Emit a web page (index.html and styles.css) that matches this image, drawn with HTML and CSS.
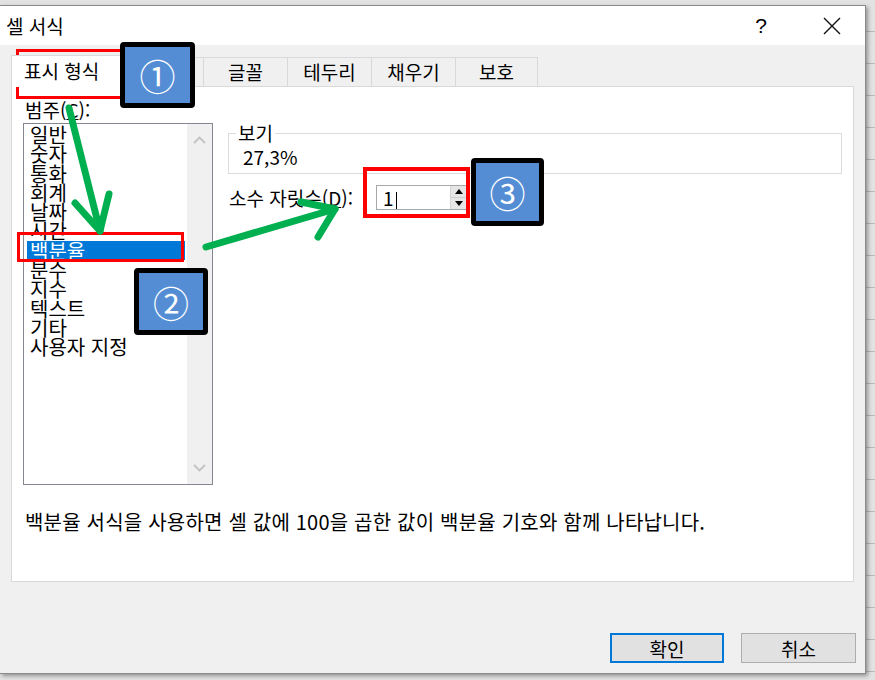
FILE: index.html
```html
<!DOCTYPE html>
<html lang="ko">
<head>
  <meta charset="UTF-8" />
  <title>셀 서식</title>
  <link rel="stylesheet" href="styles.css">
</head>
<body>

  <div class="screen">
    <div class="dialog">

      <!-- Title bar -->
      <div class="titlebar">
        <span class="title">셀 서식</span>
        <span class="help">?</span>
        <span class="close">
          <svg width="18" height="18" viewBox="0 0 18 18"><path d="M1 1 L17 17 M17 1 L1 17" stroke="#111" stroke-width="1.4" fill="none"/></svg>
        </span>
      </div>

      <div class="dlg-body">
        <!-- Tabs -->
        <div class="tabs">
          <div class="tab active w1">표시 형식</div>
          <div class="tab w2">맞춤</div>
          <div class="tab w3">글꼴</div>
          <div class="tab w3">테두리</div>
          <div class="tab w3">채우기</div>
          <div class="tab w4">보호</div>
        </div>

        <div class="panel">
          <div class="panel-main">
            <div class="cat-col">
              <div class="lbl">범주(<u>C</u>):</div>
              <div class="listbox">
                <ul class="items">
                  <li>일반</li>
                  <li>숫자</li>
                  <li>통화</li>
                  <li>회계</li>
                  <li>날짜</li>
                  <li>시간</li>
                  <li class="sel">백분율</li>
                  <li>분수</li>
                  <li>지수</li>
                  <li>텍스트</li>
                  <li>기타</li>
                  <li>사용자 지정</li>
                </ul>
                <div class="vscroll">
                  <div class="sb-arrow"><svg width="13" height="8" viewBox="0 0 13 8"><path d="M1 7 L6.5 1.5 L12 7" stroke="#c2c2c2" stroke-width="1.8" fill="none"/></svg></div>
                  <div class="sb-arrow"><svg width="13" height="8" viewBox="0 0 13 8"><path d="M1 1 L6.5 6.5 L12 1" stroke="#c2c2c2" stroke-width="1.8" fill="none"/></svg></div>
                </div>
              </div>
            </div>

            <div class="opt-col">
              <fieldset class="sample">
                <legend>보기</legend>
                <div class="sample-val">27,3%</div>
              </fieldset>
              <div class="decimals">
                <label>소수 자릿수(<u>D</u>):</label>
                <div class="spin">
                  <div class="spin-val">1<span class="caret"></span></div>
                  <div class="spin-btns">
                    <div class="spin-up"><span class="tri-up"></span></div>
                    <div class="spin-down"><span class="tri-down"></span></div>
                  </div>
                </div>
              </div>
            </div>
          </div>

          <p class="desc">백분율 서식을 사용하면 셀 값에 100을 곱한 값이 백분율 기호와 함께 나타납니다.</p>
        </div>

        <div class="buttons">
          <button class="btn ok">확인</button>
          <button class="btn cancel">취소</button>
        </div>
      </div>
    </div>

    <!-- Annotations drawn over the screenshot -->
    <div class="marks">
      <div class="red-box red1"></div>
      <div class="red-box red2"></div>
      <div class="red-box red3"></div>
      <svg class="arrows" width="875" height="680" viewBox="0 0 875 680">
        <g stroke="#00b050" stroke-width="7" fill="none" stroke-linecap="round" stroke-linejoin="round">
          <path d="M69 108 L100 231"/>
          <path d="M75 203 L100 231 L109 194"/>
          <path d="M206 247 L335 209"/>
          <path d="M301 202 L335 209 L318 237"/>
        </g>
      </svg>
      <div class="num n1">①</div>
      <div class="num n2">②</div>
      <div class="num n3">③</div>
    </div>
  </div>

</body>
</html>
```

FILE: styles.css
```css
* {
  box-sizing: border-box;
}
body {
  margin: 0;
  font-family: "Noto Sans CJK KR", "Noto Sans", sans-serif;
  color: #000;
}
/* Spreadsheet behind the dialog */
.screen {
  position: relative;
  width: 875px;
  height: 680px;
  overflow: hidden;
  padding-top: 5px;
  background: repeating-linear-gradient(to bottom, #e2e2e2 0 31px, #b9b9b9 31px 32px);
}
.dialog {
  width: 866px;
  height: 669px;
  border: 1px solid #8a8a8a;
  border-left: none;
  background: #f0f0f0;
  box-shadow: 2px 2px 4px rgba(0,0,0,0.35);
  display: flex;
  flex-direction: column;
}
.titlebar {
  height: 39px;
  background: #fff;
  display: flex;
  align-items: center;
  flex-shrink: 0;
}
.title {
  padding-left: 6px;
  font-size: 19px;
}
.help {
  margin-left: auto;
  margin-right: 28px;
  width: 40px;
  text-align: center;
  font-size: 21px;
  font-family: "Liberation Sans", sans-serif;
}
.close {
  width: 46px;
  margin-right: 10px;
  display: flex;
  justify-content: center;
}
.dlg-body {
  flex: 1;
  padding-top: 12px;
  display: flex;
  flex-direction: column;
}
/* Tabs */
.tabs {
  display: flex;
  align-items: flex-end;
  height: 30px;
  padding-left: 11px;
  margin-bottom: -1px;
}
.tab {
  height: 30px;
  border: 1px solid #d9d9d9;
  border-right: none;
  background: #f0f0f0;
  font-size: 19px;
  line-height: 27px;
  text-align: center;
}
.tab.w4 {
  border-right: 1px solid #d9d9d9;
}
.tab.active {
  height: 32px;
  background: #fff;
  border-bottom: none;
  position: relative;
  z-index: 1;
  line-height: 30px;
  text-align: left;
  padding-left: 12px;
}
.w1 { width: 109px; }
.w2 { width: 83px; }
.w3 { width: 84px; }
.w4 { width: 83px; }
/* Panel */
.panel {
  height: 496px;
  margin: 0 11px 0 11px;
  border: 1px solid #d9d9d9;
  background: #fff;
  padding: 10px 11px 0 11px;
}
.panel-main {
  display: flex;
  gap: 15px;
}
.cat-col {
  width: 190px;
}
.lbl {
  font-size: 19px;
  line-height: 26px;
  padding-left: 2px;
}
.listbox {
  height: 362px;
  border: 1px solid #828790;
  display: flex;
}
.items {
  list-style: none;
  margin: 0;
  padding: 1px 0 0 3px;
  flex: 1;
  font-size: 20px;
  line-height: 19.3px;
}
.items li {
  padding-left: 3px;
  margin-right: 2px;
  white-space: nowrap;
}
.items li.sel {
  background: #0078d7;
  color: #fff;
}
.vscroll {
  width: 25px;
  background: #f0f0f0;
  display: flex;
  flex-direction: column;
  justify-content: space-between;
}
.sb-arrow {
  height: 32px;
  display: flex;
  align-items: center;
  justify-content: center;
}
.opt-col {
  flex: 1;
}
.sample {
  margin: 25px 0 0 0;
  border: 1px solid #dcdcdc;
  padding: 2px 14px 5px;
  min-width: 0;
}
.sample legend {
  padding: 0 2px;
  margin-left: -7px;
  font-size: 19px;
  line-height: 22px;
}
.sample-val {
  font-size: 19px;
  line-height: 22px;
}
.decimals {
  display: flex;
  align-items: center;
  margin-top: 11px;
  height: 25px;
}
.decimals label {
  width: 148px;
  padding-left: 1px;
  font-size: 19px;
  line-height: 25px;
  white-space: nowrap;
}
.spin {
  width: 91px;
  height: 25px;
  border: 1px solid #a8a8a8;
  display: flex;
}
.spin-val {
  flex: 1;
  padding-left: 6px;
  font-size: 19px;
  line-height: 23px;
}
.caret {
  display: inline-block;
  width: 1px;
  height: 17px;
  background: #000;
  margin-left: 2px;
  vertical-align: -3px;
}
.spin-btns {
  width: 16px;
  display: flex;
  flex-direction: column;
  border-left: 1px solid #d4d4d4;
}
.spin-up, .spin-down {
  flex: 1;
  background: #e6e6e6;
  display: flex;
  align-items: center;
  justify-content: center;
}
.spin-up {
  border-bottom: 1px solid #cfcfcf;
}
.tri-up {
  border-left: 4px solid transparent;
  border-right: 4px solid transparent;
  border-bottom: 5px solid #000;
}
.tri-down {
  border-left: 4px solid transparent;
  border-right: 4px solid transparent;
  border-top: 5px solid #000;
}
.desc {
  margin: 24px 0 0 0;
  padding-left: 2px;
  font-size: 20px;
  letter-spacing: 0.2px;
  line-height: 26px;
  white-space: nowrap;
}
/* Buttons */
.buttons {
  margin-top: 51px;
  display: flex;
  justify-content: flex-end;
  gap: 17px;
  padding-right: 9px;
}
.btn {
  height: 30px;
  border: 1px solid #adadad;
  background: #e1e1e1;
  font-family: inherit;
  font-size: 19px;
  padding: 0;
  color: #000;
}
.btn.ok {
  width: 114px;
  border: 2px solid #0078d7;
}
.btn.cancel {
  width: 115px;
}
/* Annotations */
.marks {
  position: absolute;
  inset: 0;
  pointer-events: none;
}
.arrows {
  position: absolute;
  left: 0;
  top: 0;
}
.red-box {
  position: absolute;
  border: 3px solid #ff0000;
}
.red1 { left: 16px; top: 49px; width: 112px; height: 50px; }
.red2 { left: 17px; top: 232px; width: 167px; height: 30px; }
.red3 { left: 363px; top: 167px; width: 107px; height: 51px; border-width: 4px; }
.num {
  position: absolute;
  background: #548dd4;
  border: 5px solid #000;
  border-radius: 4px;
  color: #fff;
  font-size: 36px;
  display: flex;
  align-items: center;
  justify-content: center;
}
.n1 { left: 120px; top: 42px; width: 75px; height: 66px; }
.n2 { left: 134px; top: 268px; width: 74px; height: 67px; }
.n3 { left: 471px; top: 158px; width: 73px; height: 68px; }
```
